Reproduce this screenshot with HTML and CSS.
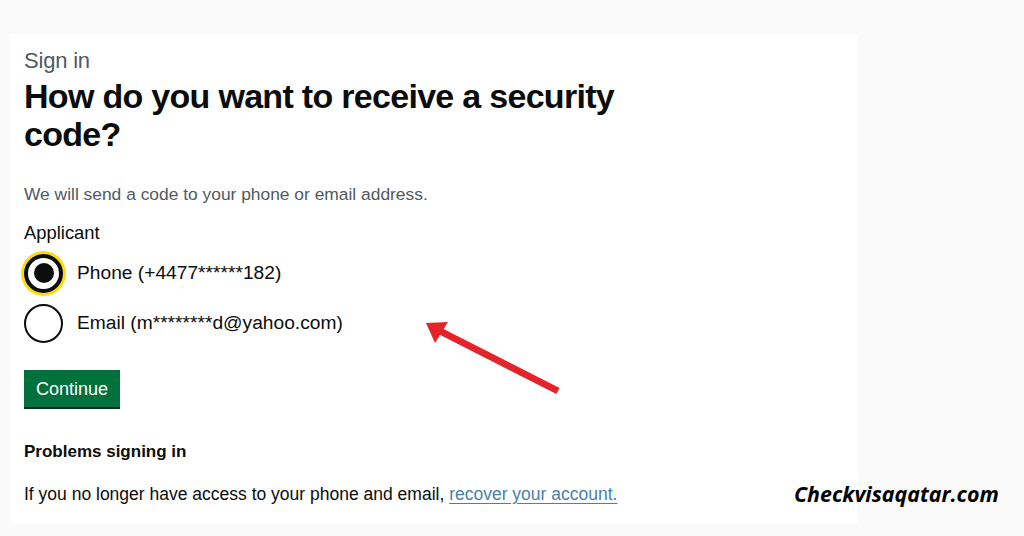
FILE: index.html
```html
<!DOCTYPE html>
<html lang="en">
<head>
<meta charset="utf-8">
<title>Sign in</title>
<link rel="stylesheet" href="styles.css">
</head>
<body>
<div class="page">
  <main class="panel">
    <span class="caption">Sign in</span>
    <h1 class="heading">How do you want to receive a security code?</h1>
    <p class="hint">We will send a code to your phone or email address.</p>
    <fieldset class="radios">
      <legend class="legend">Applicant</legend>
      <label class="radio">
        <span class="circle circle-checked"><span class="dot"></span></span>
        <span class="radio-label">Phone (+4477******182)</span>
      </label>
      <label class="radio">
        <span class="circle"></span>
        <span class="radio-label">Email (m********d@yahoo.com)</span>
      </label>
    </fieldset>
    <button class="button" type="button">Continue</button>
    <h2 class="subheading">Problems signing in</h2>
    <p class="body">If you no longer have access to your phone and email, <a class="link" href="#">recover your account.</a></p>
    <svg class="arrow" width="150" height="90" viewBox="0 0 150 90" aria-hidden="true">
      <line x1="134" y1="76" x2="14" y2="15" stroke="#e5232b" stroke-width="7"/>
      <polygon points="2,8 24,7 11,28" fill="#e5232b"/>
    </svg>
  </main>
  <aside class="side">
    <span class="brand">Checkvisaqatar.com</span>
  </aside>
</div>
</body>
</html>
```
FILE: styles.css
```css
html, body {
  margin: 0;
  padding: 0;
}
body {
  background: #fafafa;
  font-family: "Liberation Sans", Arial, sans-serif;
  color: #0b0c0c;
  width: 1024px;
  height: 536px;
  overflow: hidden;
}
.page {
  display: flex;
  height: 536px;
}
.panel {
  position: relative;
  margin: 34px 0 12px 10px;
  width: 848px;
  background: #ffffff;
  padding: 13px 0 0 14px;
  box-sizing: border-box;
  display: flex;
  flex-direction: column;
  align-items: flex-start;
}
.caption {
  font-size: 22px;
  line-height: 28px;
  color: #505a5f;
  letter-spacing: -0.2px;
}
.heading {
  margin: 2px 0 0;
  font-size: 34px;
  line-height: 38px;
  font-weight: 700;
  width: 620px;
  letter-spacing: -0.7px;
}
.hint {
  margin: 30px 0 0;
  font-size: 17.4px;
  line-height: 22px;
  color: #505a5f;
}
.radios {
  border: 0;
  margin: 16px 0 0;
  padding: 0;
}
.legend {
  padding: 0;
  font-size: 18.4px;
  line-height: 24px;
}
.radio {
  display: flex;
  align-items: center;
  gap: 14px;
  height: 40px;
  margin-top: 8px;
}
.radio + .radio {
  margin-top: 10px;
}
.circle {
  width: 39px;
  height: 39px;
  border: 2px solid #0b0c0c;
  border-radius: 50%;
  box-sizing: border-box;
  display: flex;
  align-items: center;
  justify-content: center;
  flex: none;
}
.circle-checked {
  border-width: 4px;
  box-shadow: 0 0 0 3px #ffdd00;
}
.dot {
  width: 20px;
  height: 20px;
  border-radius: 50%;
  background: #0b0c0c;
}
.radio-label {
  font-size: 19.2px;
  line-height: 24px;
  color: #0b0c0c;
}
.button {
  margin-top: 27px;
  background: #00703c;
  color: #ffffff;
  border: 0;
  box-shadow: 0 2px 0 #002d18;
  font-family: inherit;
  font-size: 18px;
  line-height: 22px;
  padding: 8px 11px 7px;
  width: 96px;
}
.subheading {
  margin: 34px 0 0;
  font-size: 17px;
  line-height: 22px;
  font-weight: 700;
}
.body {
  margin: 20px 0 0;
  font-size: 17.5px;
  line-height: 22px;
  color: #0b0c0c;
}
.link {
  color: #4a7fa9;
  text-decoration: underline;
  text-underline-offset: 3px;
}
.arrow {
  position: absolute;
  left: 414px;
  top: 281px;
}
.side {
  position: relative;
  z-index: 1;
  flex: 1;
  display: flex;
  align-items: flex-end;
  padding: 0 0 28px 0;
}
.brand {
  font-family: "Open Sans", sans-serif;
  font-weight: 700;
  font-style: italic;
  font-size: 21.4px;
  color: #000000;
  margin-left: -64px;
  white-space: nowrap;
}
```
